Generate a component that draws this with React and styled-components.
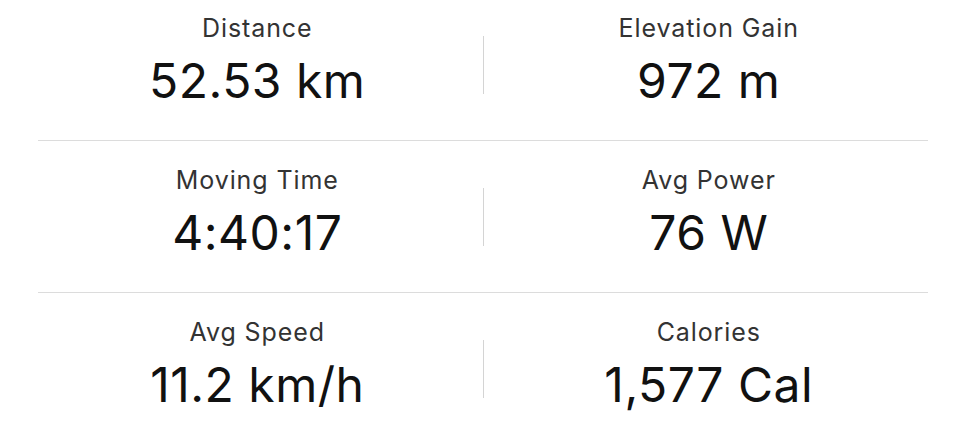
import React from "react";
import styled, { createGlobalStyle } from "styled-components";

const Global = createGlobalStyle`
  html, body { margin: 0; padding: 0; background: #fff; }
  body { font-family: Inter, "Noto Sans", sans-serif; -webkit-font-smoothing: antialiased; }
`;

const Page = styled.div`
  width: 966px;
`;

const Row = styled.div`
  display: grid;
  grid-template-columns: 1fr 1px 1fr;
  align-items: center;
  padding: ${(p) => (p.$first ? "13px" : "24px")} 32px 29px;
`;

const Cell = styled.div`
  display: flex;
  flex-direction: column;
  align-items: center;
`;

const Label = styled.div`
  font-size: 25px;
  line-height: 30px;
  letter-spacing: 0.9px;
  color: #333;
  font-weight: 400;
`;

const Value = styled.div`
  font-size: 48px;
  line-height: 60px;
  letter-spacing: 0.5px;
  color: #111;
  font-weight: 400;
  margin-top: 8px;
`;

const VDivider = styled.div`
  width: 1px;
  height: 58px;
  background: #d4d4d4;
  margin-top: 6px;
`;

const HDivider = styled.div`
  height: 1px;
  margin: 0 38px;
  background: #dcdcdc;
`;

const rows = [
  [["Distance", "52.53 km"], ["Elevation Gain", "972 m"]],
  [["Moving Time", "4:40:17"], ["Avg Power", "76 W"]],
  [["Avg Speed", "11.2 km/h"], ["Calories", "1,577 Cal"]],
];

export default function App() {
  return (
    <Page>
      <Global />
      {rows.map((r, i) => (
        <React.Fragment key={i}>
          {i > 0 && <HDivider />}
          <Row $first={i === 0}>
            <Cell>
              <Label>{r[0][0]}</Label>
              <Value>{r[0][1]}</Value>
            </Cell>
            <VDivider />
            <Cell>
              <Label>{r[1][0]}</Label>
              <Value>{r[1][1]}</Value>
            </Cell>
          </Row>
        </React.Fragment>
      ))}
    </Page>
  );
}
